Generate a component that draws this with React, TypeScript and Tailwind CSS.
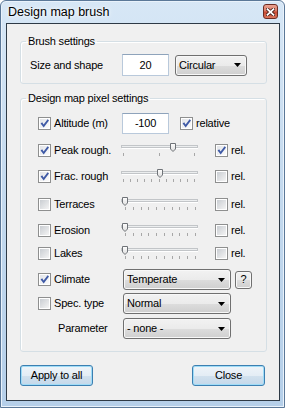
const TICKS_3 = [2, 38, 73]
const TICKS_11 = Array.from({ length: 11 }, (_, i) => 2 + i * 7.1)
const TICKS_10 = Array.from({ length: 10 }, (_, i) => 4 + i * 7.78)

function CheckBox({ checked = false }: { checked?: boolean }) {
  return (
    <svg width="13" height="13" viewBox="0 0 13 13" className="shrink-0">
      <defs>
        <linearGradient id="cbOff" x1="0" y1="0" x2="1" y2="1">
          <stop offset="0" stopColor="#c9cdd2" />
          <stop offset="1" stopColor="#f4f4f4" />
        </linearGradient>
        <linearGradient id="cbOn" x1="0" y1="0" x2="1" y2="1">
          <stop offset="0" stopColor="#e2e4e8" />
          <stop offset="1" stopColor="#fbfbfb" />
        </linearGradient>
      </defs>
      <rect x="0.5" y="0.5" width="12" height="12" fill="#fff" stroke="#8e8f8f" />
      <rect x="2" y="2" width="9" height="9" fill={checked ? 'url(#cbOn)' : 'url(#cbOff)'} />
      {checked && (
        <path d="M2.6 6.4 L4.2 5.2 L5.6 7.6 L9.6 2.2 L11 3.4 L5.7 10.6 Z" fill="#3f5aa6" />
      )}
    </svg>
  )
}

function Slider({ thumb, ticks }: { thumb: number; ticks: number[] }) {
  return (
    <svg width="78" height="20" viewBox="0 0 78 20" className="shrink-0">
      <defs>
        <linearGradient id="thumbG" x1="0" y1="0" x2="0" y2="1">
          <stop offset="0" stopColor="#ffffff" />
          <stop offset="1" stopColor="#dcdcdc" />
        </linearGradient>
      </defs>
      <rect x="0.5" y="5.5" width="76" height="2" fill="#eceeef" stroke="#c2c5c8" />
      <line x1="1" y1="8.5" x2="77" y2="8.5" stroke="#ffffff" />
      {ticks.map((t, i) => (
        <line key={i} x1={Math.round(t) + 0.5} y1="13" x2={Math.round(t) + 0.5} y2="16" stroke="#a7a7a7" />
      ))}
      <path
        d={`M${thumb - 2.5} 3.5 H${thumb + 2.5} V9 L${thumb} 11.5 L${thumb - 2.5} 9 Z`}
        fill="url(#thumbG)"
        stroke="#6f7378"
      />
    </svg>
  )
}

function Arrow() {
  return (
    <svg width="7" height="4" viewBox="0 0 7 4" className="shrink-0">
      <path d="M0 0 H7 L3.5 4 Z" fill="#000" />
    </svg>
  )
}

function Combo({ text, className }: { text: string; className: string }) {
  return (
    <div
      className={`flex h-[21px] items-center justify-between rounded-[3px] border border-[#707070] bg-[linear-gradient(#f2f2f2_0%,#ebebeb_50%,#dddddd_51%,#cfcfcf_100%)] pl-[3px] pr-[5px] shadow-[inset_0_0_0_1px_#f8f8f8] ${className}`}
    >
      <span>{text}</span>
      <Arrow />
    </div>
  )
}

function TextBox({ value, className }: { value: string; className: string }) {
  return (
    <div
      className={`flex items-center justify-center border border-[#b9c9db] border-t-[#8ea3bb] bg-white ${className}`}
    >
      {value}
    </div>
  )
}

function PushButton({ label, className }: { label: string; className: string }) {
  return (
    <button
      type="button"
      className={`flex h-[21px] w-[73px] items-center justify-center rounded-[3px] border border-[#3c7fb1] bg-[linear-gradient(#eef4f9_0%,#e4edf5_50%,#d2e1ee_51%,#c4d8ea_100%)] text-black shadow-[inset_0_0_0_1px_#9fdcf7] ${className}`}
    >
      {label}
    </button>
  )
}

function SliderRow({
  label,
  checked,
  thumb,
  ticks,
  rel,
  className,
}: {
  label: string
  checked: boolean
  thumb: number
  ticks: number[]
  rel: boolean
  className: string
}) {
  return (
    <div className={`flex h-[20px] items-center ${className}`}>
      <div className="flex w-[83px] items-center gap-[3px]">
        <CheckBox checked={checked} />
        <span>{label}</span>
      </div>
      <Slider thumb={thumb} ticks={ticks} />
      <div className="ml-[16px] flex items-center gap-[3px]">
        <CheckBox checked={rel} />
        <span>rel.</span>
      </div>
    </div>
  )
}

export default function App() {
  return (
    <div className="flex h-[408px] w-[285px] flex-col overflow-hidden rounded-t-[6px] border border-[#5b7898] bg-[linear-gradient(180deg,#d7e7f6_0%,#c6dbef_40%,#b5cfe9_100%)] font-['Liberation_Sans',Arial,sans-serif] text-[11px] tracking-[-0.2px] text-black shadow-[inset_0_0_0_1px_#e9f2fb]">
      {/* Title bar */}
      <div className="flex h-[22px] shrink-0 items-start justify-between pl-[7px] pr-[6px]">
        <span className="mt-[4px] text-[12.5px] leading-[15px] tracking-normal [text-shadow:0_0_6px_#ffffff,0_0_3px_#ffffff]">
          Design map brush
        </span>
        <div className="mt-[3px] flex h-[15px] w-[15px] items-center justify-center rounded-[3px] border border-[#6e2c22] bg-[linear-gradient(#eaa392_0%,#dc7a66_45%,#c74a32_55%,#d9765e_100%)]">
          <svg width="9" height="8" viewBox="0 0 9 8">
            <path d="M1.5 1.2 L7.5 6.8 M7.5 1.2 L1.5 6.8" stroke="#4a1e18" strokeWidth="3.4" strokeLinecap="square" />
            <path d="M1.5 1.2 L7.5 6.8 M7.5 1.2 L1.5 6.8" stroke="#ffffff" strokeWidth="1.8" strokeLinecap="square" />
          </svg>
        </div>
      </div>

      {/* Client area */}
      <div className="ml-[5px] mr-[4px] flex h-[378px] flex-col border border-[#2e3a46] bg-[#f0f0f0]">
        <fieldset className="ml-[13px] mt-[11px] w-[247px] rounded-[3px] border border-[#d5dfe5] pb-[7px] pt-[6px] shadow-[inset_1px_1px_0_#ffffff]">
          <legend className="ml-[5px] px-[2px] leading-[13px]">Brush settings</legend>
          <div className="flex h-[22px] items-center pl-[9px]">
            <span className="w-[92px]">Size and shape</span>
            <TextBox value="20" className="h-[22px] w-[47px]" />
            <Combo text="Circular" className="ml-[6px] w-[72px]" />
          </div>
        </fieldset>

        <fieldset className="ml-[13px] mt-[8px] w-[247px] rounded-[3px] border border-[#d5dfe5] pb-[12px] pl-[17px] pt-[8px] shadow-[inset_1px_1px_0_#ffffff]">
          <legend className="-ml-[12px] px-[2px] leading-[13px]">Design map pixel settings</legend>

          <div className="flex h-[21px] items-center">
            <div className="flex w-[83px] items-center gap-[3px]">
              <CheckBox checked />
              <span>Altitude (m)</span>
            </div>
            <TextBox value="-100" className="ml-[1px] h-[21px] w-[47px]" />
            <div className="ml-[11px] flex items-center gap-[3px]">
              <CheckBox checked />
              <span>relative</span>
            </div>
          </div>

          <SliderRow label="Peak rough." checked thumb={52} ticks={TICKS_3} rel className="mt-[6px]" />
          <SliderRow label="Frac. rough" checked thumb={39} ticks={TICKS_11} rel={false} className="mt-[6px]" />
          <SliderRow label="Terraces" checked={false} thumb={4} ticks={TICKS_10} rel={false} className="mt-[8px]" />
          <SliderRow label="Erosion" checked={false} thumb={4} ticks={TICKS_10} rel={false} className="mt-[6px]" />
          <SliderRow label="Lakes" checked={false} thumb={4} ticks={TICKS_10} rel={false} className="mt-[3px]" />

          <div className="mt-[6px] flex h-[21px] items-center">
            <div className="flex w-[83px] items-center gap-[3px]">
              <CheckBox checked />
              <span>Climate</span>
            </div>
            <Combo text="Temperate" className="ml-[2px] w-[108px]" />
            <div className="ml-[4px] flex h-[18px] w-[17px] items-center justify-center rounded-[3px] border border-[#707070] bg-[linear-gradient(#f2f2f2_0%,#ebebeb_50%,#dddddd_51%,#cfcfcf_100%)] shadow-[inset_0_0_0_1px_#f8f8f8]">
              ?
            </div>
          </div>

          <div className="mt-[3px] flex h-[21px] items-center">
            <div className="flex w-[83px] items-center gap-[3px]">
              <CheckBox />
              <span>Spec. type</span>
            </div>
            <Combo text="Normal" className="ml-[2px] w-[108px]" />
          </div>

          <div className="mt-[4px] flex h-[21px] items-center">
            <span className="w-[83px] pl-[20px]">Parameter</span>
            <Combo text="- none -" className="ml-[2px] w-[108px]" />
          </div>
        </fieldset>

        <div className="mt-[13px] flex">
          <PushButton label="Apply to all" className="ml-[13px]" />
          <PushButton label="Close" className="ml-[99px]" />
        </div>
      </div>
    </div>
  )
}
